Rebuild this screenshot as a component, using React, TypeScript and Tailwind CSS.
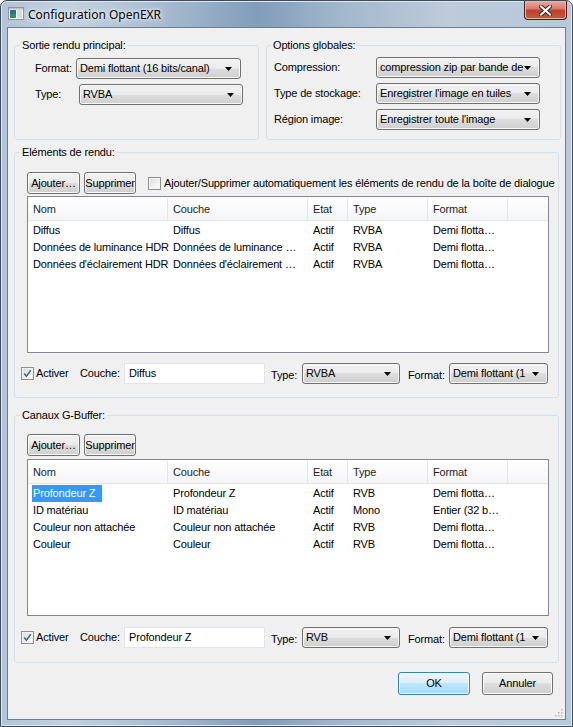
import React from "react";

function Arrow() {
  return (
    <svg width="7" height="4" viewBox="0 0 7 4" className="shrink-0">
      <path d="M0 0H7L3.5 4Z" fill="#000" />
    </svg>
  );
}

function Select({ text, className }: { text: string; className: string }) {
  return (
    <div
      className={
        "flex h-[21px] items-center rounded-[3px] border border-[#707070] bg-[linear-gradient(#f2f2f2_0%,#ebebeb_50%,#dddddd_50%,#cfcfcf_100%)] pl-[3px] pr-[8px] shadow-[inset_0_0_0_1px_#f8f8f8] " +
        className
      }
    >
      <span className="flex-1 overflow-hidden whitespace-nowrap">{text}</span>
      <Arrow />
    </div>
  );
}

function Btn({ children, className }: { children: React.ReactNode; className: string }) {
  return (
    <div
      className={
        "flex items-center justify-center whitespace-nowrap rounded-[3px] border border-[#707070] bg-[linear-gradient(#f2f2f2_0%,#ebebeb_50%,#dddddd_50%,#cfcfcf_100%)] shadow-[inset_0_0_0_1px_#fcfcfc] " +
        className
      }
    >
      {children}
    </div>
  );
}

function Check({ checked, className = "" }: { checked?: boolean; className?: string }) {
  return (
    <div
      className={
        "flex h-[13px] w-[13px] shrink-0 items-center justify-center border border-[#8e8f8f] bg-[linear-gradient(135deg,#dcdcdc,#ffffff)] shadow-[inset_0_0_0_1px_#f4f4f4] " +
        className
      }
    >
      {checked && (
        <svg width="9" height="9" viewBox="0 0 9 9">
          <path d="M1.2 4.6L3.4 7.2L7.8 1.2" stroke="#4c5f8c" strokeWidth="1.5" fill="none" />
        </svg>
      )}
    </div>
  );
}

const colW = ["w-[140px]", "w-[140px]", "w-[40px]", "w-[80px]", "w-[80px]"];
const headers = ["Nom", "Couche", "Etat", "Type", "Format"];

function List({ rows, selected }: { rows: string[][]; selected?: number }) {
  return (
    <div className="h-[157px] w-[522px] border border-[#828790] bg-white">
      <div className="flex h-[24px] border-b border-[#e5e5e5] bg-[linear-gradient(#ffffff,#f4f5f7)] pt-[1px] text-[#1e1e1e]">
        {headers.map((h, i) => (
          <div key={h} className={"flex items-center border-r border-[#e2e5ea] pl-[5px] " + colW[i]}>
            {h}
          </div>
        ))}
        <div className="flex-1" />
      </div>
      <div className="pt-[1px]">
        {rows.map((r, ri) => (
          <div key={ri} className="flex h-[17px] items-center leading-[17px]">
            {r.map((c, ci) => (
              <div key={ci} className={"shrink-0 whitespace-nowrap " + (ci === 0 ? "pl-[4px] " : "pl-[5px] ") + colW[ci]}>
                {ci === 0 && selected === ri ? (
                  <span className="inline-block h-[17px] bg-[#3399ff] pl-[1px] pr-[7px] text-white">{c}</span>
                ) : ci === 0 ? (
                  <span className="pl-[1px]">{c}</span>
                ) : (
                  c
                )}
              </div>
            ))}
          </div>
        ))}
      </div>
    </div>
  );
}

function BottomRow({ couche, type, className }: { couche: string; type: string; className: string }) {
  return (
    <div className={"flex items-center pl-[6px] " + className}>
      <Check checked />
      <span className="ml-[2px] w-[44px] pb-[1px]">Activer</span>
      <span className="w-[44px]">Couche:</span>
      <div className="flex h-[21px] w-[141px] items-center border border-[#e2e3ea] bg-white pl-[4px]">{couche}</div>
      <span className="ml-[6px] w-[31px] pt-[3px]">Type:</span>
      <Select text={type} className="w-[98px]" />
      <span className="ml-[8px] w-[41px] pt-[3px]">Format:</span>
      <Select text="Demi flottant (1" className="w-[99px] pr-[7px]" />
    </div>
  );
}

export default function App() {
  const rows1 = [
    ["Diffus", "Diffus", "Actif", "RVBA", "Demi flotta…"],
    ["Données de luminance HDR", "Données de luminance …", "Actif", "RVBA", "Demi flotta…"],
    ["Données d'éclairement HDR", "Données d'éclairement …", "Actif", "RVBA", "Demi flotta…"],
  ];
  const rows2 = [
    ["Profondeur Z", "Profondeur Z", "Actif", "RVB", "Demi flotta…"],
    ["ID matériau", "ID matériau", "Actif", "Mono", "Entier (32 b…"],
    ["Couleur non attachée", "Couleur non attachée", "Actif", "RVB", "Demi flotta…"],
    ["Couleur", "Couleur", "Actif", "RVB", "Demi flotta…"],
  ];
  return (
    <div className="flex h-[727px] w-[573px] flex-col overflow-hidden rounded-t-[7px] border border-[#3d4d5f] bg-[linear-gradient(90deg,#b3c4d6_0%,#c3d1df_12%,#a8bcd0_28%,#819dba_45%,#a3b8cd_60%,#bdcbda_78%,#b7c8d9_100%)] font-['Tahoma','Liberation_Sans',Arial,sans-serif] text-[11px] leading-[13px] tracking-[-0.15px] text-black shadow-[inset_0_0_0_1px_#dfe8f1]">
      {/* title bar */}
      <div className="flex h-[26px] shrink-0 items-start">
        <div className="flex h-[26px] items-center pl-[7px]">
          <svg width="16" height="14" viewBox="0 0 16 14" className="mr-[4px]">
            <rect x="0.5" y="0.5" width="15" height="12" fill="#f4f4f4" stroke="#8a96a3" />
            <rect x="2" y="3" width="6" height="8" fill="#2f6e8c" />
            <rect x="2" y="7" width="6" height="4" fill="#3f8a58" />
            <rect x="9" y="3" width="5" height="8" fill="#d8dde2" />
            <rect x="1" y="1" width="14" height="1.5" fill="#b9c3cc" />
          </svg>
          <span className="font-['Segoe_UI','Noto_Sans',sans-serif] text-[12px] tracking-normal text-black [text-shadow:0_0_6px_#ffffff,0_0_3px_#ffffff]">
            Configuration OpenEXR
          </span>
        </div>
        <div className="ml-auto mr-[5px] flex h-[19px] w-[43px] items-center justify-center rounded-b-[4px] border border-t-0 border-[#4b1e19] bg-[linear-gradient(#e8aaa0_0%,#d7796b_45%,#c1402c_50%,#c65a3c_100%)] shadow-[inset_0_0_0_1px_#eab5aa]">
          <svg width="13" height="11" viewBox="0 0 13 11">
            <path d="M2 1.5L11 9.5M11 1.5L2 9.5" stroke="#3b1a16" strokeWidth="4" strokeLinecap="square" />
            <path d="M2 1.5L11 9.5M11 1.5L2 9.5" stroke="#ffffff" strokeWidth="2.2" strokeLinecap="square" />
          </svg>
        </div>
      </div>

      {/* client */}
      <div className="relative mx-[6px] mb-[6px] flex flex-1 flex-col border border-[#6c7e92] bg-[#f0f0f0]">
        {/* top groups */}
        <div className="ml-[6px] mt-[11px] flex gap-[7px]">
          <fieldset className="h-[101px] w-[245px] rounded-[3px] border border-[#d5dfe5]">
            <legend className="ml-[5px] px-[2px] leading-[13px]">Sortie rendu principal:</legend>
            <div className="flex flex-col gap-[5px] pt-[6px]">
              <div className="flex items-center pl-[20px]">
                <span className="w-[41px]">Format:</span>
                <Select text="Demi flottant (16 bits/canal)" className="w-[165px]" />
              </div>
              <div className="flex items-center pl-[20px]">
                <span className="w-[44px]">Type:</span>
                <Select text="RVBA" className="w-[164px]" />
              </div>
            </div>
          </fieldset>
          <fieldset className="h-[101px] w-[295px] rounded-[3px] border border-[#d5dfe5]">
            <legend className="ml-[4px] px-[2px] leading-[13px]">Options globales:</legend>
            <div className="flex flex-col gap-[5px] pt-[5px]">
              <div className="flex items-center pl-[7px]">
                <span className="w-[102px]">Compression:</span>
                <Select text="compression zip par bande de" className="w-[164px]" />
              </div>
              <div className="flex items-center pl-[7px]">
                <span className="w-[102px]">Type de stockage:</span>
                <Select text="Enregistrer l'image en tuiles" className="w-[164px]" />
              </div>
              <div className="flex items-center pl-[7px]">
                <span className="w-[102px]">Région image:</span>
                <Select text="Enregistrer toute l'image" className="w-[164px]" />
              </div>
            </div>
          </fieldset>
        </div>

        {/* Eléments de rendu */}
        <fieldset className="ml-[6px] mt-[6px] h-[252px] w-[545px] rounded-[3px] border border-[#d5dfe5]">
          <legend className="ml-[5px] px-[2px] leading-[13px]">Eléments de rendu:</legend>
          <div className="flex items-center pl-[12px] pt-[13px]">
            <Btn className="h-[22px] w-[53px]">Ajouter…</Btn>
            <Btn className="ml-[4px] h-[22px] w-[52px]">Supprimer</Btn>
            <Check className="ml-[12px]" />
            <span className="ml-[3px] whitespace-nowrap">
              Ajouter/Supprimer automatiquement les éléments de rendu de la boîte de dialogue
            </span>
          </div>
          <div className="ml-[12px] mt-[2px]">
            <List rows={rows1} />
          </div>
          <BottomRow couche="Diffus" type="RVBA" className="mt-[10px]" />
        </fieldset>

        {/* Canaux G-Buffer */}
        <fieldset className="ml-[6px] mt-[11px] h-[254px] w-[545px] rounded-[3px] border border-[#d5dfe5]">
          <legend className="ml-[5px] px-[2px] leading-[13px]">Canaux G-Buffer:</legend>
          <div className="flex items-center pl-[12px] pt-[12px]">
            <Btn className="h-[22px] w-[53px]">Ajouter…</Btn>
            <Btn className="ml-[4px] h-[22px] w-[52px]">Supprimer</Btn>
          </div>
          <div className="ml-[12px] mt-[3px]">
            <List rows={rows2} selected={0} />
          </div>
          <BottomRow couche="Profondeur Z" type="RVB" className="mt-[11px]" />
        </fieldset>

        {/* OK / Annuler */}
        <div className="mr-[12px] mt-[9px] flex justify-end gap-[12px]">
          <Btn className="h-[23px] w-[72px] !border-[#3c7fb1] !bg-[linear-gradient(#eaf6fd_0%,#d9f0fc_50%,#bee6fd_50%,#a7d9f5_100%)] shadow-[inset_0_0_0_1px_#c4e5f6]">
            OK
          </Btn>
          <Btn className="h-[23px] w-[71px]">Annuler</Btn>
        </div>

        {/* size grip */}
        <svg width="10" height="10" viewBox="0 0 10 10" className="absolute bottom-[2px] right-[2px]">
          {[
            [8, 2],
            [5, 5],
            [8, 5],
            [2, 8],
            [5, 8],
            [8, 8],
          ].map(([x, y], i) => (
            <rect key={i} x={x} y={y} width="1.5" height="1.5" fill="#b8b8b8" />
          ))}
        </svg>
      </div>
    </div>
  );
}
